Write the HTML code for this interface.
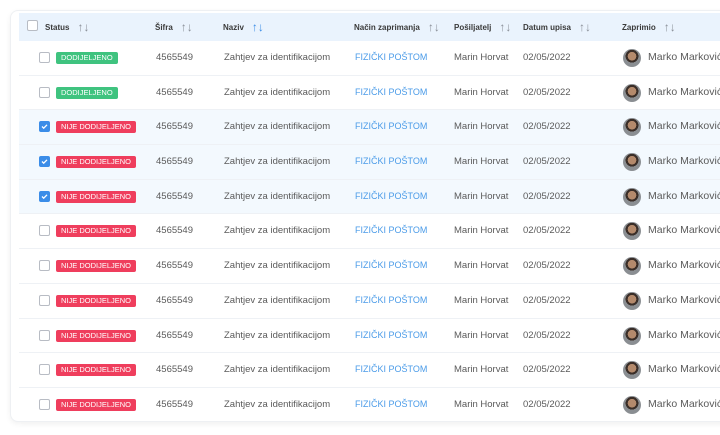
<!DOCTYPE html>
<html><head><style>
*{margin:0;padding:0;box-sizing:border-box}
body{width:720px;height:435px;background:#fff;font-family:"Liberation Sans",sans-serif;overflow:hidden;position:relative}
.card{position:absolute;left:10px;top:10px;width:730px;height:412px;border:1px solid #eef0f3;border-radius:8px;box-shadow:0 2px 6px rgba(0,0,0,.06);background:#fff;overflow:hidden}
.hdr{position:absolute;left:8px;top:2px;width:730px;height:28px;background:#eaf3fd}
.row{position:relative;width:730px;height:34.7px;border-bottom:1px solid #eef1f5;margin-left:8px}
.rows{position:absolute;left:0;top:30px;width:740px}
.sel{background:#f3f9fe}
.t{position:absolute;font-size:9.5px;color:#5a5a5a;white-space:nowrap;top:11px}
.f{left:336px;color:#4a9be8;font-size:9px}
.h{position:absolute;font-size:8px;color:#3a3a3a;font-weight:bold;white-space:nowrap;top:7px}
.ar{color:#8a8f98;font-size:12px;font-weight:normal;margin-left:8px;vertical-align:-1px}
.cb{position:absolute;width:11px;height:11px;border:1px solid #b8bcc4;border-radius:2px;background:#fff;left:20px;top:11px}
.cb.on{background:#3b8de8;border-color:#3b8de8}
.b{position:absolute;height:12px;font-size:7.5px;color:#fff;line-height:12px;padding:0 5px;border-radius:2px;white-space:nowrap;left:37px;top:11px}
.g{background:#3fc37f}.r{background:#ef3e5d}
.av{position:absolute;width:18px;height:18px;border-radius:50%;left:604px;top:8px;background:radial-gradient(circle at 50% 40%,#b48a6c 0 30%,#3a2e28 31% 45%,#8a8e92 46%)}
.n{left:629px;top:10px;font-size:10.5px}
</style></head><body>
<div class="card">
<div class="hdr">
<div class="cb" style="left:8px;top:7px"></div>
<div class="h" style="left:26px">Status<span class="ar">↑↓</span></div>
<div class="h" style="left:136px">Šifra<span class="ar">↑↓</span></div>
<div class="h" style="left:204px">Naziv<span class="ar" style="color:#3b8de8">↑↓</span></div>
<div class="h" style="left:335px">Način zaprimanja<span class="ar">↑↓</span></div>
<div class="h" style="left:435px">Pošiljatelj<span class="ar">↑↓</span></div>
<div class="h" style="left:504px">Datum upisa<span class="ar">↑↓</span></div>
<div class="h" style="left:603px">Zaprimio<span class="ar">↑↓</span></div>
</div>
<div class="rows">
<div class="row"><div class="cb"></div><div class="b g">DODIJELJENO</div><div class="t" style="left:137px">4565549</div><div class="t" style="left:205px">Zahtjev za identifikacijom</div><div class="t f">FIZIČKI POŠTOM</div><div class="t" style="left:435px">Marin Horvat</div><div class="t" style="left:504px">02/05/2022</div><div class="av"></div><div class="t n">Marko Marković</div></div>
<div class="row"><div class="cb"></div><div class="b g">DODIJELJENO</div><div class="t" style="left:137px">4565549</div><div class="t" style="left:205px">Zahtjev za identifikacijom</div><div class="t f">FIZIČKI POŠTOM</div><div class="t" style="left:435px">Marin Horvat</div><div class="t" style="left:504px">02/05/2022</div><div class="av"></div><div class="t n">Marko Marković</div></div>
<div class="row sel"><div class="cb on"><svg width="9" height="9" viewBox="0 0 9 9" style="position:absolute;left:0;top:0"><path d="M2 4.5l1.7 1.7L7 2.8" stroke="#fff" stroke-width="1.3" fill="none"/></svg></div><div class="b r">NIJE DODIJELJENO</div><div class="t" style="left:137px">4565549</div><div class="t" style="left:205px">Zahtjev za identifikacijom</div><div class="t f">FIZIČKI POŠTOM</div><div class="t" style="left:435px">Marin Horvat</div><div class="t" style="left:504px">02/05/2022</div><div class="av"></div><div class="t n">Marko Marković</div></div>
<div class="row sel"><div class="cb on"><svg width="9" height="9" viewBox="0 0 9 9" style="position:absolute;left:0;top:0"><path d="M2 4.5l1.7 1.7L7 2.8" stroke="#fff" stroke-width="1.3" fill="none"/></svg></div><div class="b r">NIJE DODIJELJENO</div><div class="t" style="left:137px">4565549</div><div class="t" style="left:205px">Zahtjev za identifikacijom</div><div class="t f">FIZIČKI POŠTOM</div><div class="t" style="left:435px">Marin Horvat</div><div class="t" style="left:504px">02/05/2022</div><div class="av"></div><div class="t n">Marko Marković</div></div>
<div class="row sel"><div class="cb on"><svg width="9" height="9" viewBox="0 0 9 9" style="position:absolute;left:0;top:0"><path d="M2 4.5l1.7 1.7L7 2.8" stroke="#fff" stroke-width="1.3" fill="none"/></svg></div><div class="b r">NIJE DODIJELJENO</div><div class="t" style="left:137px">4565549</div><div class="t" style="left:205px">Zahtjev za identifikacijom</div><div class="t f">FIZIČKI POŠTOM</div><div class="t" style="left:435px">Marin Horvat</div><div class="t" style="left:504px">02/05/2022</div><div class="av"></div><div class="t n">Marko Marković</div></div>
<div class="row"><div class="cb"></div><div class="b r">NIJE DODIJELJENO</div><div class="t" style="left:137px">4565549</div><div class="t" style="left:205px">Zahtjev za identifikacijom</div><div class="t f">FIZIČKI POŠTOM</div><div class="t" style="left:435px">Marin Horvat</div><div class="t" style="left:504px">02/05/2022</div><div class="av"></div><div class="t n">Marko Marković</div></div>
<div class="row"><div class="cb"></div><div class="b r">NIJE DODIJELJENO</div><div class="t" style="left:137px">4565549</div><div class="t" style="left:205px">Zahtjev za identifikacijom</div><div class="t f">FIZIČKI POŠTOM</div><div class="t" style="left:435px">Marin Horvat</div><div class="t" style="left:504px">02/05/2022</div><div class="av"></div><div class="t n">Marko Marković</div></div>
<div class="row"><div class="cb"></div><div class="b r">NIJE DODIJELJENO</div><div class="t" style="left:137px">4565549</div><div class="t" style="left:205px">Zahtjev za identifikacijom</div><div class="t f">FIZIČKI POŠTOM</div><div class="t" style="left:435px">Marin Horvat</div><div class="t" style="left:504px">02/05/2022</div><div class="av"></div><div class="t n">Marko Marković</div></div>
<div class="row"><div class="cb"></div><div class="b r">NIJE DODIJELJENO</div><div class="t" style="left:137px">4565549</div><div class="t" style="left:205px">Zahtjev za identifikacijom</div><div class="t f">FIZIČKI POŠTOM</div><div class="t" style="left:435px">Marin Horvat</div><div class="t" style="left:504px">02/05/2022</div><div class="av"></div><div class="t n">Marko Marković</div></div>
<div class="row"><div class="cb"></div><div class="b r">NIJE DODIJELJENO</div><div class="t" style="left:137px">4565549</div><div class="t" style="left:205px">Zahtjev za identifikacijom</div><div class="t f">FIZIČKI POŠTOM</div><div class="t" style="left:435px">Marin Horvat</div><div class="t" style="left:504px">02/05/2022</div><div class="av"></div><div class="t n">Marko Marković</div></div>
<div class="row"><div class="cb"></div><div class="b r">NIJE DODIJELJENO</div><div class="t" style="left:137px">4565549</div><div class="t" style="left:205px">Zahtjev za identifikacijom</div><div class="t f">FIZIČKI POŠTOM</div><div class="t" style="left:435px">Marin Horvat</div><div class="t" style="left:504px">02/05/2022</div><div class="av"></div><div class="t n">Marko Marković</div></div>
</div>
</div>
</body></html>
